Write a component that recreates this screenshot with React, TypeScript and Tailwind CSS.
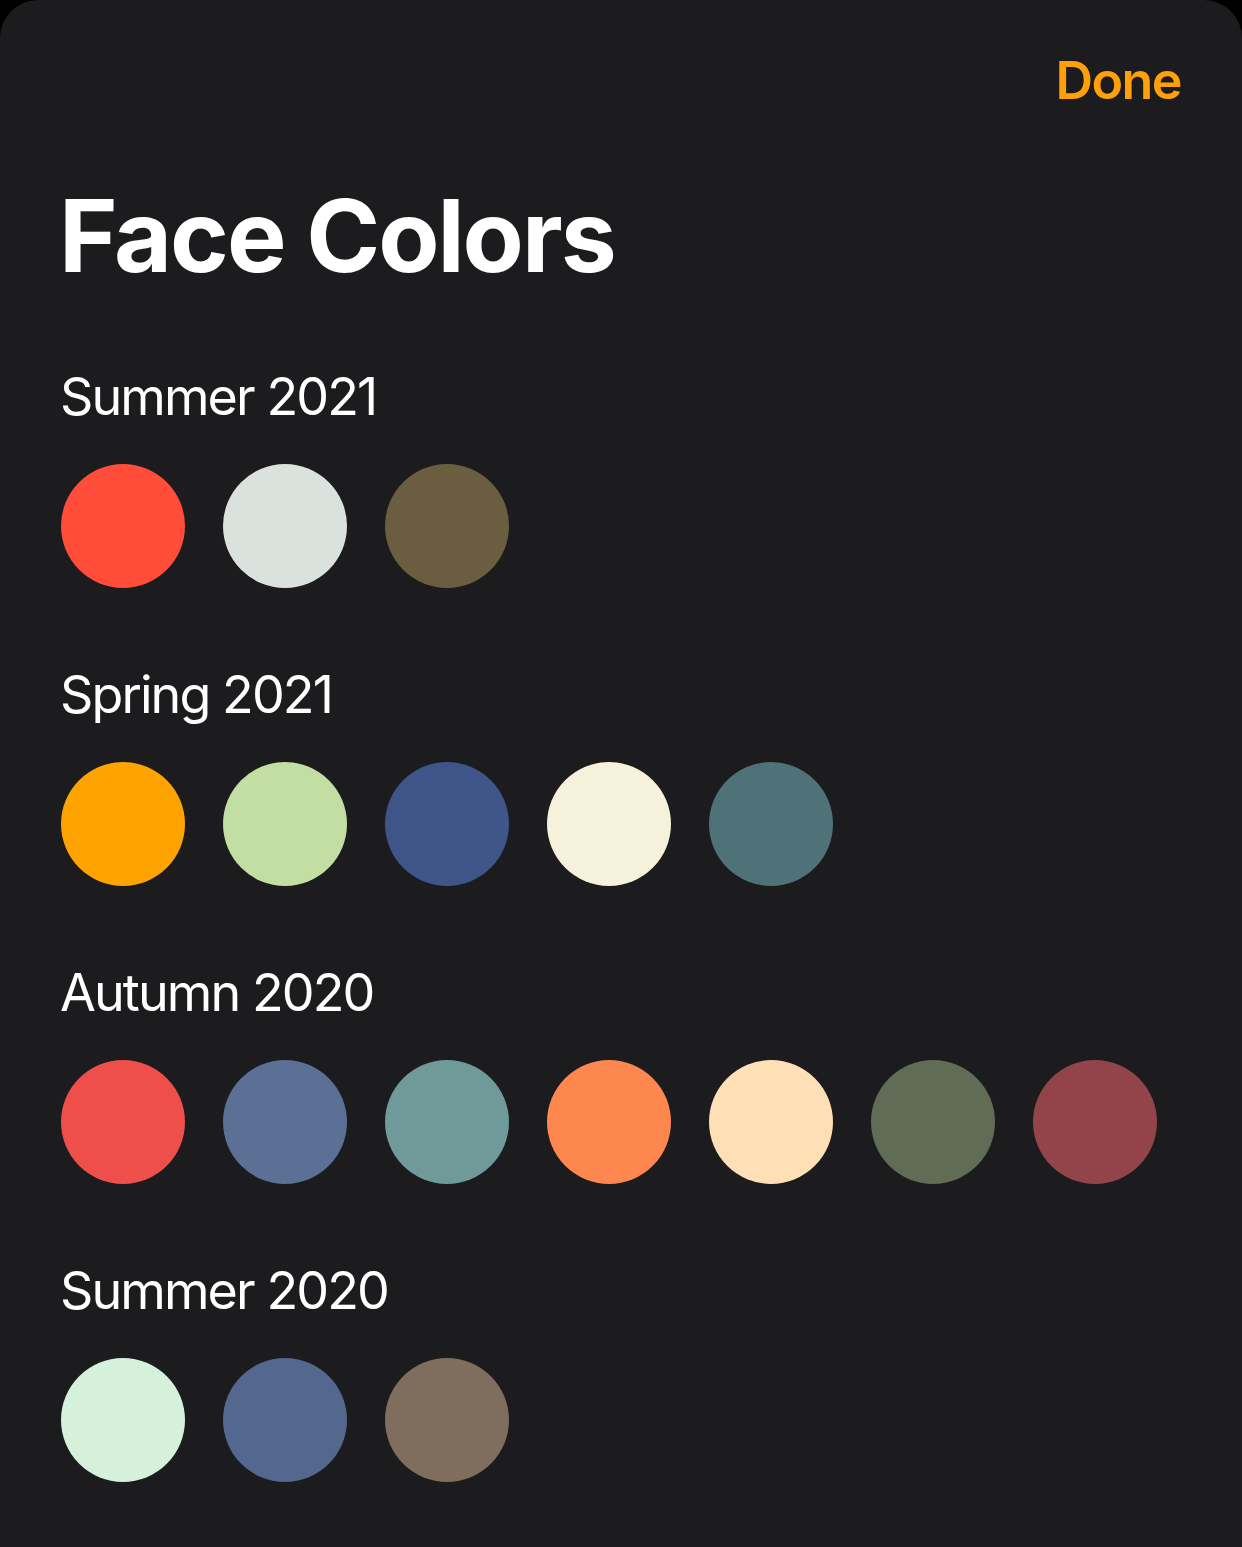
const palettes: { name: string; colors: string[] }[] = [
  { name: "Summer 2021", colors: ["#ff4d3a", "#dbe1dd", "#6b5e40"] },
  { name: "Spring 2021", colors: ["#ffa300", "#c2dea3", "#3f5589", "#f6f1db", "#4e7277"] },
  {
    name: "Autumn 2020",
    colors: ["#ef4f4a", "#5c6f95", "#709999", "#fe8750", "#ffe0b6", "#606c56", "#93444a"],
  },
  { name: "Summer 2020", colors: ["#d5f1dc", "#53678f", "#7f6d5e"] },
];

function Swatch({ color }: { color: string }) {
  return <div className="h-[124px] w-[124px] shrink-0 rounded-full" style={{ backgroundColor: color }} />;
}

export default function App() {
  return (
    <div className="h-[1547px] w-[1242px] overflow-hidden bg-black" style={{ fontFamily: "Inter, 'Noto Sans', sans-serif" }}>
      <div className="flex h-[1600px] flex-col rounded-t-[38px] bg-[#1c1c1e] px-[61px]">
        <div className="flex justify-end pt-[55px]">
          <button className="text-[52px] font-semibold leading-none tracking-[-1.6px] text-[#ff9f0a]">Done</button>
        </div>

        <h1 className="-ml-[2px] mt-[79px] text-[100px] font-bold leading-none tracking-[-2px] text-white">Face Colors</h1>

        <div className="mt-[85px] flex flex-col gap-[81px]">
          {palettes.map((p) => (
            <section key={p.name} className="flex flex-col gap-[41px]">
              <h2 className="-ml-[1px] text-[52px] font-normal leading-none tracking-[-1.9px] text-white">{p.name}</h2>
              <div className="flex gap-[38px]">
                {p.colors.map((c, i) => (
                  <Swatch key={i} color={c} />
                ))}
              </div>
            </section>
          ))}
        </div>
      </div>
    </div>
  );
}
